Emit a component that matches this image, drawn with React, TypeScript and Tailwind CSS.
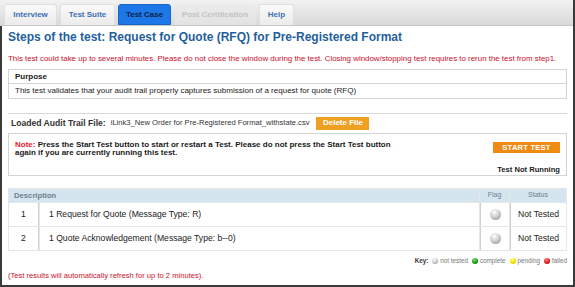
const tabs = [
  { label: 'Interview', state: 'normal', w: 'w-[53px]' },
  { label: 'Test Suite', state: 'normal', w: 'w-[55px]' },
  { label: 'Test Case', state: 'active', w: 'w-[53px]' },
  { label: 'Post Certification', state: 'disabled', w: 'w-[82px]' },
  { label: 'Help', state: 'normal', w: 'w-[35px]' },
];

const rows = [
  { n: 1, desc: '1 Request for Quote (Message Type: R)', status: 'Not Tested' },
  { n: 2, desc: '1 Quote Acknowledgement (Message Type: b--0)', status: 'Not Tested' },
];

// little shaded ball used for the flag column and the key
function Ball({ color, size }: { color: 'gray' | 'green' | 'yellow' | 'red'; size: string }) {
  const bg = {
    gray: 'bg-[radial-gradient(circle_at_40%_30%,#ffffff_0%,#d0d0d0_45%,#858585_100%)]',
    green: 'bg-[radial-gradient(circle_at_40%_30%,#7ee07e_0%,#1fa51f_50%,#0b6e0b_100%)]',
    yellow: 'bg-[radial-gradient(circle_at_40%_30%,#fffbb0_0%,#f5e400_50%,#c9b800_100%)]',
    red: 'bg-[radial-gradient(circle_at_40%_30%,#ff8a8a_0%,#ee1c1c_50%,#b00000_100%)]',
  }[color];
  return <span className={`inline-block shrink-0 rounded-full ${size} ${bg}`} />;
}

function TabBar() {
  return (
    <div className="h-[26px] bg-gradient-to-b from-[#f2f2f2] to-[#d9d9d9] border-b border-[#c8c8c8] flex items-end pl-[4px] gap-[3px]">
      {tabs.map((t) => (
        <div
          key={t.label}
          className={
            'h-[21px] flex items-center justify-center whitespace-nowrap rounded-t-[3px] text-[8px] font-bold ' +
            t.w +
            ' ' +
            (t.state === 'active'
              ? 'bg-[#1d77e6] text-[#0b2345] border border-[#1a66c4]'
              : t.state === 'disabled'
                ? 'bg-gradient-to-b from-[#ececec] to-[#e2e2e2] text-[#c4c4c4]'
                : 'bg-gradient-to-b from-[#fafafa] to-[#ebebeb] text-[#3d6fb4] border border-[#e0e0e0] border-b-0')
          }
        >
          {t.label}
        </div>
      ))}
    </div>
  );
}

export default function App() {
  return (
    <div className="w-[575px] h-[287px] bg-white border-r-2 border-b-2 border-[#3a3a3a] font-['Liberation_Sans',Arial,sans-serif] overflow-hidden flex flex-col">
      <TabBar />
      <div className="flex-1 border-l-2 border-[#3a3a3a] pl-[6px] pr-[6px]">
        <h1 className="text-[12px] font-bold text-[#1f5f9e] mt-[3px] leading-[16px]">
          Steps of the test: Request for Quote (RFQ) for Pre-Registered Format
        </h1>

        <p className="text-[7.9px] text-[#c8102e] mt-[9px] leading-[10px] whitespace-nowrap">
          This test could take up to several minutes. Please do not close the window during the test. Closing window/stopping test requires to rerun the test from step1.
        </p>

        <div className="mt-[5px] border border-[#d4d4d4] text-[8px] text-[#222]">
          <div className="h-[14px] flex items-center px-[6px] font-bold border-b border-[#d4d4d4]">Purpose</div>
          <div className="h-[14px] flex items-center px-[6px]">
            This test validates that your audit trail properly captures submission of a request for quote (RFQ)
          </div>
        </div>

        <div className="mt-[14px] border-t border-[#d8d8d8]" />

        <div className="flex items-center h-[16px] mt-[1px] pl-[3px]">
          <span className="text-[8.6px] font-bold text-[#333]">Loaded Audit Trail File:</span>
          <span className="text-[7.6px] text-[#333] ml-[5px]">iLink3_New Order for Pre-Registered Format_withstate.csv</span>
          <span className="ml-[7px] h-[13px] w-[53px] bg-[#f0a020] text-white text-[8px] font-bold flex items-center justify-center">
            Delete File
          </span>
        </div>

        <div className="mt-[2px] border border-[#d4d4d4] h-[43px] flex text-[8px] text-[#1a1a1a] font-bold">
          <div className="flex-1 pl-[6px] pt-[7px] leading-[8px] whitespace-nowrap">
            <span className="text-[#e8202a]">Note:</span> Press the Start Test button to start or restart a Test. Please do not press the Start Test button
            <br />
            again if you are currently running this test.
          </div>
          <div className="flex flex-col items-end pr-[6px] pt-[8px]">
            <span className="h-[11px] w-[67px] bg-[#ef8a12] text-white text-[7.6px] flex items-center justify-center tracking-[0.2px]">
              START TEST
            </span>
            <span className="mt-[11px] text-[7.6px] text-[#222]">Test Not Running</span>
          </div>
        </div>

        <div className="mt-[12px] bg-[#e6e6e6] p-[1px]">
          <div className="grid grid-cols-[30px_1fr_29px_56px] gap-[1px] text-[8.6px] text-[#222]">
            <div className="col-span-2 h-[13px] bg-[#d5e5ef] flex items-center px-[5px] text-[7.7px] font-bold text-[#6f7f8c]">Description</div>
            <div className="h-[13px] bg-[#d5e5ef] flex items-center justify-center text-[7px] text-[#6f7f8c]">Flag</div>
            <div className="h-[13px] bg-[#d5e5ef] flex items-center justify-center text-[7px] text-[#6f7f8c]">Status</div>
            {rows.map((r) => (
              <div key={r.n} className="contents">
                <div className="h-[23px] bg-white flex items-center justify-center border-r border-[#cfcfcf]">{r.n}</div>
                <div className="h-[23px] bg-white flex items-center pl-[9px]">{r.desc}</div>
                <div className="h-[23px] bg-white flex items-center justify-center border-l border-[#cfcfcf]">
                  <Ball color="gray" size="w-[11px] h-[11px]" />
                </div>
                <div className="h-[23px] bg-white flex items-center justify-center border-l border-[#cfcfcf]">{r.status}</div>
              </div>
            ))}
          </div>
        </div>

        <div className="flex justify-end items-center gap-[2px] mt-[5px] text-[6.3px] text-[#777]">
          <span className="font-bold text-[#333] mr-[2px]">Key:</span>
          <Ball color="gray" size="w-[6px] h-[6px]" />
          <span className="mr-[2px]">not tested</span>
          <Ball color="green" size="w-[6px] h-[6px]" />
          <span className="mr-[2px]">complete</span>
          <Ball color="yellow" size="w-[6px] h-[6px]" />
          <span className="mr-[2px]">pending</span>
          <Ball color="red" size="w-[6px] h-[6px]" />
          <span>failed</span>
        </div>

        <p className="text-[7.6px] text-[#c8102e] mt-[5px]">(Test results will automatically refresh for up to 2 minutes).</p>
      </div>
    </div>
  );
}
